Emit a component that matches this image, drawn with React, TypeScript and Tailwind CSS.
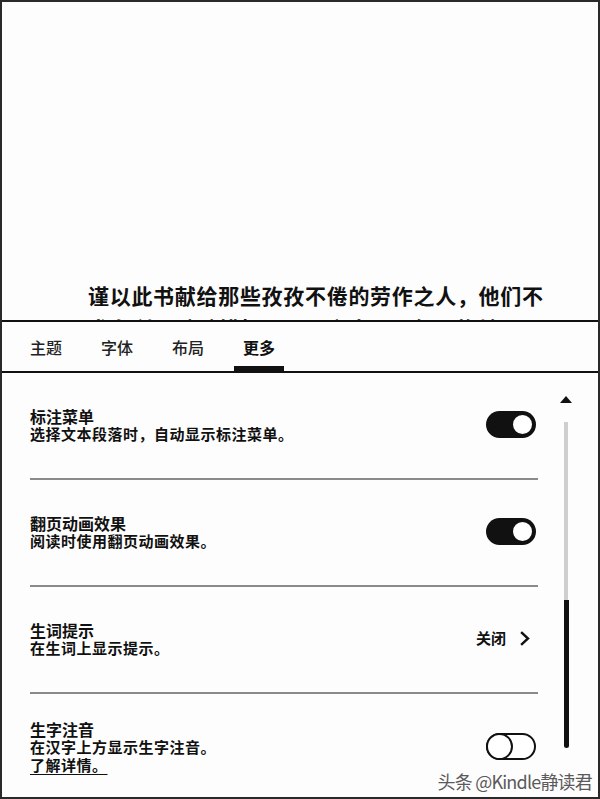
import { ReactNode } from 'react';

const FONT = { fontFamily: '"Noto Sans CJK SC", "Noto Sans", sans-serif' };

function Toggle({ on }: { on: boolean }) {
  if (on) {
    return (
      <div className="flex h-[27px] w-[50px] items-center justify-end rounded-full bg-[#111] p-[2px]">
        <div className="h-[23px] w-[23px] rounded-full border-2 border-[#111] bg-white" />
      </div>
    );
  }
  return (
    <div className="flex h-[27px] w-[50px] items-center justify-start rounded-full border-2 border-[#111] bg-white">
      <div className="-ml-[2px] h-[27px] w-[27px] rounded-full border-2 border-[#111] bg-white" />
    </div>
  );
}

function Row({ title, lines, right, last }: { title: string; lines: ReactNode[]; right: ReactNode; last?: boolean }) {
  return (
    <div className={last ? 'flex h-[103px] items-center justify-between pr-[2px] pt-[2px]' : 'flex h-[107px] items-center justify-between border-b-2 border-[#8a8a8a] pr-[2px] pb-[2px]'}>
      <div className="font-semibold leading-[18px] text-[#111]">
        <div className="text-[16px]">{title}</div>
        {lines.map((line, i) => (
          <div key={i} className="text-[15px] tracking-[0.5px]">{line}</div>
        ))}
      </div>
      {right}
    </div>
  );
}

export default function App() {
  const tabs = ['主题', '字体', '布局', '更多'];

  return (
    <div className="flex h-[799px] w-[600px] flex-col border-2 border-[#2a2a2a] bg-[#fdfdfd]" style={FONT}>
      <div className="flex h-[320px] flex-col justify-end overflow-hidden border-b-2 border-[#111] pl-[86px]">
        <p className="text-[21px] font-bold leading-[30px] tracking-[0.7px] text-[#111]">谨以此书献给那些孜孜不倦的劳作之人，他们不</p>
        <div className="h-[10px] overflow-hidden">
          <p className="pt-[3px] text-[21px] font-bold leading-[30px] tracking-[0.7px] text-[#111]">求名利，默默耕耘于平凡之中，无怨无悔地</p>
        </div>
      </div>

      <div className="flex h-[51px] gap-[39px] border-b-2 border-[#111] pl-[28px]">
        {tabs.map((tab) => (
          <div key={tab} className="relative flex h-full items-center">
            <span className={tab === '更多' ? 'text-[16px] font-bold text-[#111]' : 'text-[16px] font-medium text-[#222]'}>{tab}</span>
            {tab === '更多' && <div className="absolute bottom-0 left-1/2 h-[5px] w-[50px] -translate-x-1/2 bg-[#111]" />}
          </div>
        ))}
      </div>

      <div className="relative flex flex-1">
        <div className="w-[536px] pl-[28px]">
          <Row title="标注菜单" lines={['选择文本段落时，自动显示标注菜单。']} right={<Toggle on />} />
          <Row title="翻页动画效果" lines={['阅读时使用翻页动画效果。']} right={<Toggle on />} />
          <Row
            title="生词提示"
            lines={['在生词上显示提示。']}
            right={
              <div className="mr-[6px] flex items-center gap-[14px] text-[15px] font-semibold text-[#111]">
                <span>关闭</span>
                <svg width="10" height="15" viewBox="0 0 10 15" fill="none" stroke="#111" strokeWidth="2.4" strokeLinecap="square">
                  <path d="M2 2l6 5.5L2 13" />
                </svg>
              </div>
            }
          />
          <Row
            title="生字注音"
            lines={['在汉字上方显示生字注音。', <span className="underline decoration-1 underline-offset-[3px]">了解详情。</span>]}
            right={<Toggle on={false} />}
            last
          />
        </div>

        <div className="flex flex-1 flex-col items-center pt-[23px] pr-[4px]">
          <div className="h-0 w-0 border-r-[6px] border-b-[7px] border-l-[6px] border-r-transparent border-b-[#111] border-l-transparent" />
          <div className="mt-[19px] flex h-[326px] w-[5px] flex-col items-center">
            <div className="h-[178px] w-[4px] bg-[#cfcfcf]" />
            <div className="w-[5px] flex-1 rounded-b-full bg-[#111]" />
          </div>
        </div>

        <div className="absolute right-[6px] bottom-[2px] text-[18px] tracking-[-0.8px] text-[#5a5a5a]" style={{ fontFamily: '"Noto Sans CJK SC", "Liberation Sans", sans-serif' }}>
          头条 @Kindle静读君
        </div>
      </div>
    </div>
  );
}
